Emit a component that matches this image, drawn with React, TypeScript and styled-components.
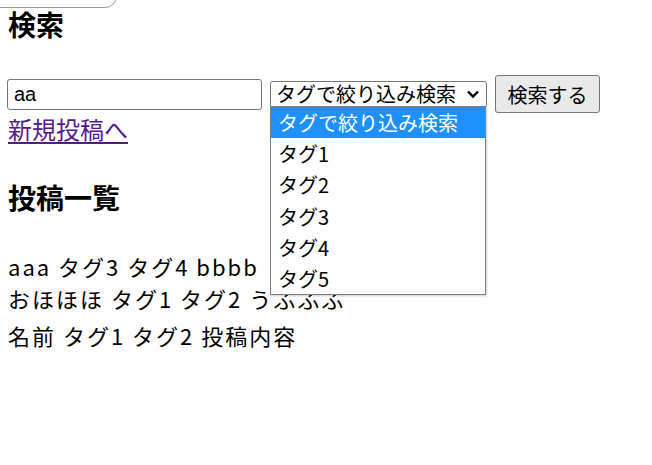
import React from "react";
import styled, { createGlobalStyle } from "styled-components";

const Global = createGlobalStyle`
  html, body { margin: 0; padding: 0; background: #fff; }
  body {
    font-family: "Noto Sans CJK JP", "Noto Sans", sans-serif;
    color: #000;
    font-size: 24px;
  }
`;

const Page = styled.div`
  position: relative;
  padding: 0 8px;
  overflow: hidden;
  height: 465px;
  box-sizing: border-box;
`;

const TopFrame = styled.div`
  margin: -24px 0 0 -12px;
  width: 121px;
  height: 32px;
  box-sizing: border-box;
  border: 1px solid #9a9a9a;
  border-radius: 0 0 12px 0;
`;

const Heading = styled.h3<{ $top: number }>`
  margin: ${(p) => p.$top}px 0 0;
  font-size: 28px;
  font-weight: bold;
  line-height: 36px;
`;

const SearchRow = styled.div`
  position: relative;
  display: flex;
  align-items: center;
  margin-top: 33px;
  height: 38px;
`;

const TextInput = styled.div`
  box-sizing: border-box;
  width: 255px;
  height: 31px;
  margin-left: -1px;
  border: 1px solid #767676;
  border-radius: 3px;
  padding: 0 6px;
  display: flex;
  align-items: center;
  font-size: 20px;
  font-family: "Liberation Sans", Arial, sans-serif;
`;

const SelectBox = styled.div`
  box-sizing: border-box;
  width: 217px;
  height: 27px;
  margin-left: 8px;
  border: 1px solid #767676;
  border-radius: 3px;
  padding: 0 6px 0 5px;
  display: flex;
  align-items: center;
  justify-content: space-between;
  font-size: 20px;
  line-height: 1;
`;

const Button = styled.div`
  box-sizing: border-box;
  width: 105px;
  height: 38px;
  margin-left: 8px;
  border: 1px solid #767676;
  border-radius: 3px;
  background: #e9e9e9;
  display: flex;
  align-items: center;
  justify-content: center;
  font-size: 20px;
`;

const Dropdown = styled.div`
  position: absolute;
  left: 262px;
  top: 31px;
  width: 216px;
  box-sizing: border-box;
  border: 1px solid #808080;
  background: #fff;
  box-shadow: 1px 1px 2px rgba(0, 0, 0, 0.2);
  z-index: 2;
`;

const Option = styled.div<{ $active?: boolean }>`
  height: 31.2px;
  display: flex;
  align-items: center;
  padding-left: 7px;
  font-size: 20px;
  background: ${(p) => (p.$active ? "#1e90ff" : "#fff")};
  color: ${(p) => (p.$active ? "#fff" : "#000")};
`;

const LinkLine = styled.div`
  line-height: 32px;
`;

const NewLink = styled.a`
  color: #551a8b;
  text-decoration: underline;
  text-underline-offset: 3px;
  font-size: 24px;
`;

const PostList = styled.div`
  margin-top: 35px;
`;

const Post = styled.div<{ $space: number }>`
  margin-top: ${(p) => p.$space}px;
  font-size: 22px;
  letter-spacing: 2px;
  line-height: 32px;
  white-space: nowrap;
`;

const Chevron = () => (
  <svg width="14" height="10" viewBox="0 0 14 10">
    <path d="M2 2.5 L7 7.5 L12 2.5" fill="none" stroke="#000" strokeWidth="2.4" />
  </svg>
);

const posts = [
  { text: "aaa タグ3 タグ4 bbbb", space: 0 },
  { text: "おほほほ タグ1 タグ2 うふふふ", space: 0 },
  { text: "名前 タグ1 タグ2 投稿内容", space: 5 },
];

const options = ["タグで絞り込み検索", "タグ1", "タグ2", "タグ3", "タグ4", "タグ5"];

export default function App() {
  return (
    <>
      <Global />
      <Page>
        <TopFrame />
        <Heading $top={-2}>検索</Heading>
        <SearchRow>
          <TextInput>aa</TextInput>
          <SelectBox>
            <span>タグで絞り込み検索</span>
            <Chevron />
          </SelectBox>
          <Button>検索する</Button>
          <Dropdown>
            {options.map((o, i) => (
              <Option key={o} $active={i === 0}>
                {o}
              </Option>
            ))}
          </Dropdown>
        </SearchRow>
        <LinkLine>
          <NewLink href="#">新規投稿へ</NewLink>
        </LinkLine>
        <Heading $top={34}>投稿一覧</Heading>
        <PostList>
          {posts.map((p) => (
            <Post key={p.text} $space={p.space}>
              {p.text}
            </Post>
          ))}
        </PostList>
      </Page>
    </>
  );
}
